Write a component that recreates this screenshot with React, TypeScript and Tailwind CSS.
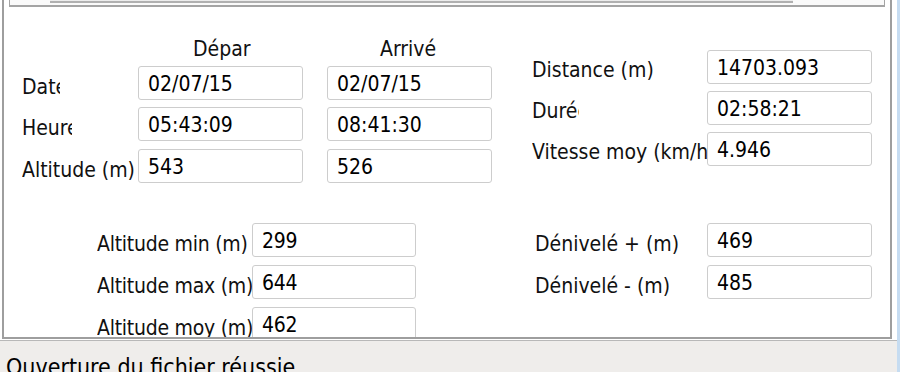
import React from "react";

const Field = ({ value, w = "w-[165px]" }: { value: string; w?: string }) => (
  <div
    className={`${w} h-[34px] shrink-0 border border-[#cdcdcd] rounded-[3px] bg-white flex items-center pt-[2px] pl-[9px] leading-[24px] text-black`}
  >
    {value}
  </div>
);

const Label = ({ text, w, mt = "mt-[8px]" }: { text: string; w: string; mt?: string }) => (
  <div className={`${w} ${mt} shrink-0 overflow-hidden whitespace-nowrap leading-[24px]`}>
    {text}
  </div>
);

export default function App() {
  return (
    <div className="w-[900px] h-[372px] overflow-hidden bg-white flex text-[21px] text-[#111] font-['DejaVu_Sans_Condensed','DejaVu_Sans',sans-serif] [font-stretch:condensed]">
      <div className="w-[897px] shrink-0 flex flex-col">
        {/* panel */}
        <div className="h-[339px] shrink-0 flex">
          <div className="w-[2px] shrink-0" />
          <div className="w-[890px] shrink-0 border-l-2 border-r-2 border-b-2 border-[#9e9e9e] overflow-hidden flex flex-col">
            {/* bottom of the box above */}
            <div className="ml-[5px] w-[876px] h-[7px] shrink-0 border-l border-r border-b-2 border-[#a4a4a4] bg-[#fafafa]">
              <div className="ml-[40px] w-[743px] h-[3px] border-b-2 border-[#b0b0b0] bg-[#ececec]" />
            </div>

            {/* départ / arrivée + totals */}
            <div className="mt-[30px] flex shrink-0">
              <div className="ml-[18px] w-[470px] flex flex-col">
                <div className="h-[24px] flex leading-[24px]">
                  <span className="ml-[171px] w-[187px]">Dépar</span>
                  <span>Arrivé</span>
                </div>
                <div className="mt-[5px] flex">
                  <Label text="Date" w="w-[38px]" mt="mt-[9px]" />
                  <div className="w-[78px] shrink-0" />
                  <Field value="02/07/15" />
                  <div className="w-[24px] shrink-0" />
                  <Field value="02/07/15" />
                </div>
                <div className="mt-[7px] flex">
                  <Label text="Heure" w="w-[50px]" mt="mt-[9px]" />
                  <div className="w-[66px] shrink-0" />
                  <Field value="05:43:09" />
                  <div className="w-[24px] shrink-0" />
                  <Field value="08:41:30" />
                </div>
                <div className="mt-[8px] flex">
                  <Label text="Altitude (m)" w="w-[116px]" mt="mt-[9px]" />
                  <Field value="543" />
                  <div className="w-[24px] shrink-0" />
                  <Field value="526" />
                </div>
              </div>

              <div className="ml-[40px] mt-[13px] flex flex-col gap-[7px]">
                <div className="flex">
                  <Label text="Distance (m)" w="w-[175px]" />
                  <Field value="14703.093" />
                </div>
                <div className="flex">
                  <Label text="Durée" w="w-[47px]" />
                  <div className="w-[128px] shrink-0" />
                  <Field value="02:58:21" />
                </div>
                <div className="flex">
                  <Label text="Vitesse moy (km/h)" w="w-[175px]" />
                  <Field value="4.946" />
                </div>
              </div>
            </div>

            {/* altitudes + dénivelés */}
            <div className="mt-[40px] flex shrink-0">
              <div className="ml-[93px] flex flex-col gap-[8px] tracking-[-0.25px]">
                <div className="flex">
                  <Label text="Altitude min (m)" w="w-[155px]" mt="mt-[9px]" />
                  <Field value="299" w="w-[164px]" />
                </div>
                <div className="flex">
                  <Label text="Altitude max (m)" w="w-[155px]" mt="mt-[9px]" />
                  <Field value="644" w="w-[164px]" />
                </div>
                <div className="flex">
                  <Label text="Altitude moy (m)" w="w-[155px]" mt="mt-[9px]" />
                  <Field value="462" w="w-[164px]" />
                </div>
              </div>
              <div className="ml-[119px] flex flex-col gap-[8px]">
                <div className="flex">
                  <Label text="Dénivelé + (m)" w="w-[172px]" mt="mt-[9px]" />
                  <Field value="469" />
                </div>
                <div className="flex">
                  <Label text="Dénivelé - (m)" w="w-[172px]" mt="mt-[9px]" />
                  <Field value="485" />
                </div>
              </div>
            </div>
          </div>
          <div className="w-[5px] shrink-0" />
        </div>

        {/* status bar */}
        <div className="mt-[1px] flex-1 border-t border-[#b8b8b8] bg-[#efedeb] relative">
          <div className="pl-[6px] pt-[13px] text-[23px] leading-[26px] whitespace-nowrap text-black">
            Ouverture du fichier réussie
          </div>
          <div className="absolute right-[4px] bottom-[2px] flex flex-col items-end gap-[1px]">
            <span className="w-[2px] h-[2px] bg-[#b5b5b5]" />
            <span className="w-[2px] h-[2px] bg-[#b5b5b5]" />
          </div>
        </div>
      </div>
      <div className="w-[3px] shrink-0 bg-[#c6dcf1]" />
    </div>
  );
}
